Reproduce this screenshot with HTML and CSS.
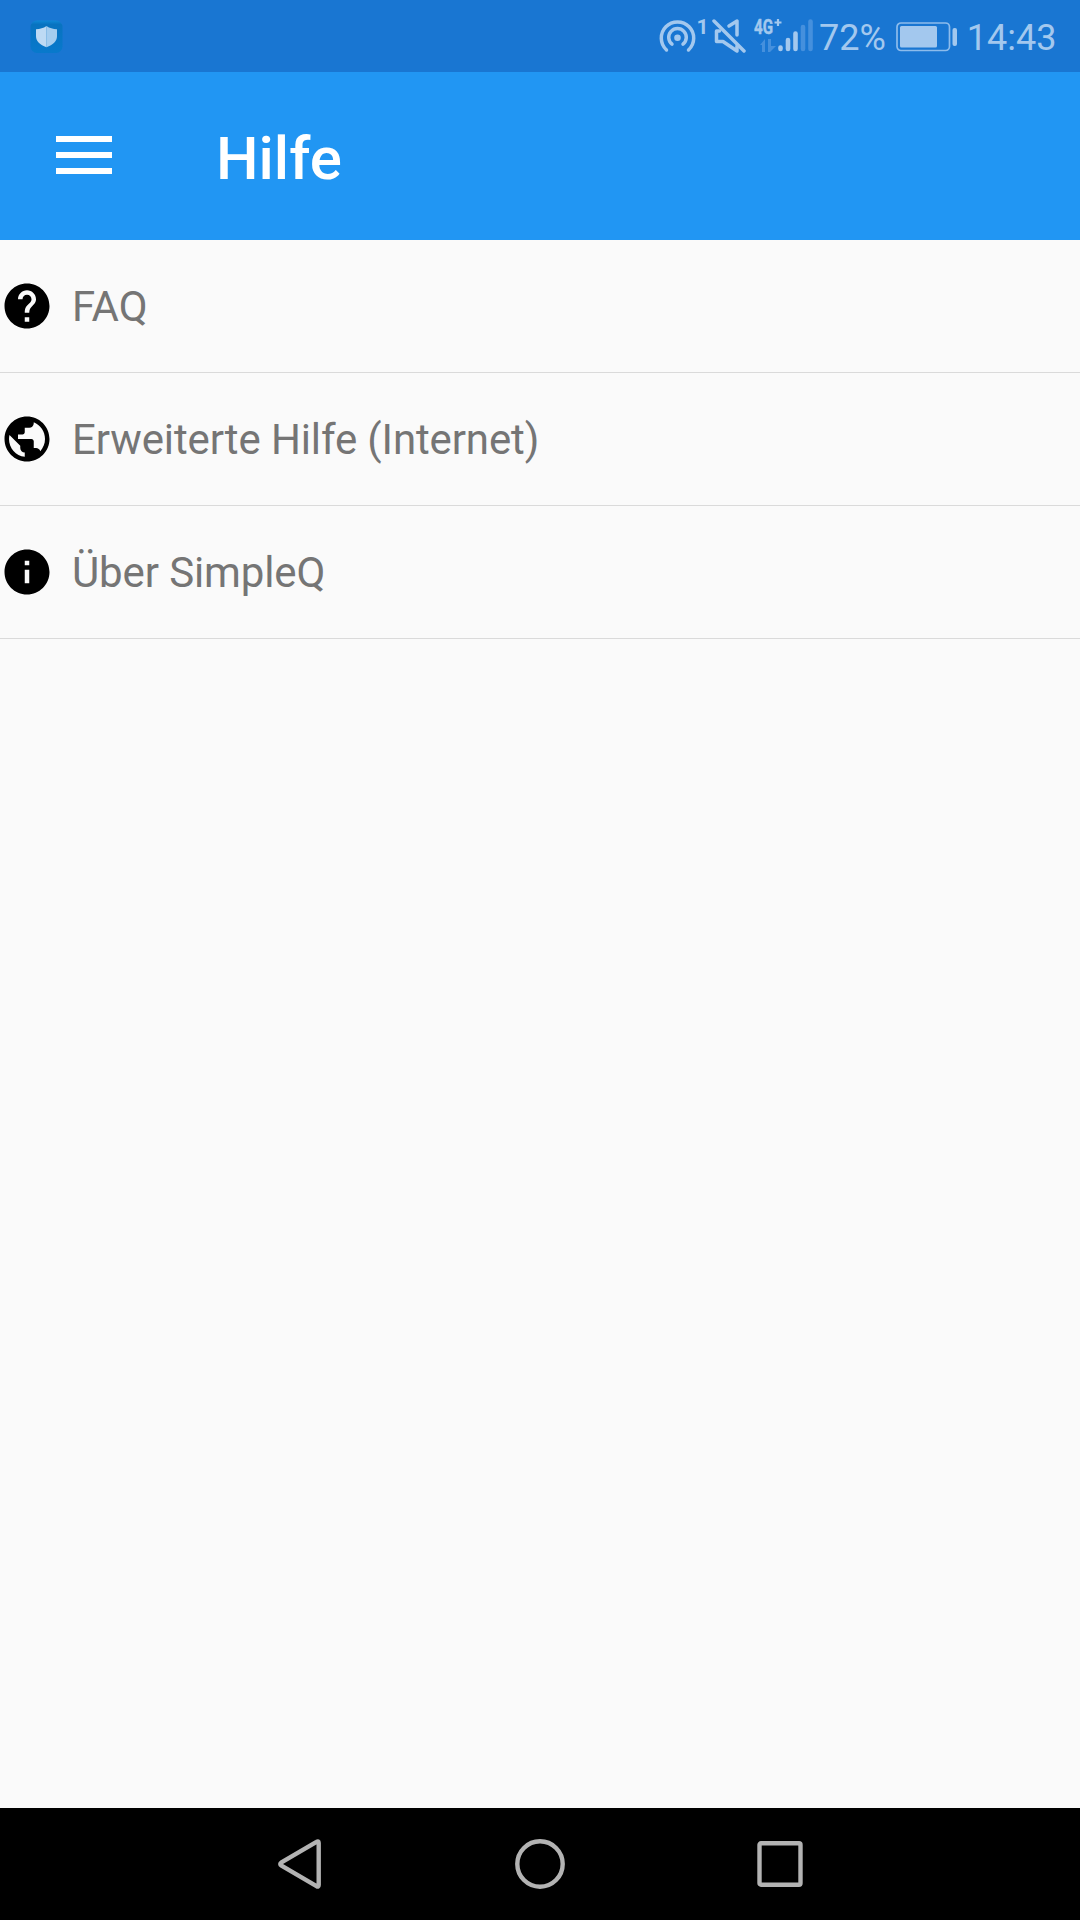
FILE: index.html
```html
<!DOCTYPE html>
<html lang="de">
<head>
<meta charset="utf-8">
<title>Hilfe</title>
<link rel="stylesheet" href="styles.css">
</head>
<body>
<div class="screen">
  <div class="status-bar">
    <svg class="app-shield" width="34" height="34" viewBox="0 0 34 34">
      <defs><linearGradient id="tile" x1="0" y1="0" x2="0" y2="1"><stop offset="0" stop-color="#1089d8"/><stop offset=".12" stop-color="#0873c0"/><stop offset="1" stop-color="#0879cc"/></linearGradient></defs>
      <rect x=".5" y=".5" width="32" height="32.5" rx="6.500" fill="url(#tile)"/>
      <path d="M16.500 6c3 2.200 6.500 3 10.500 3.200v7c0 5-4 8.500-10.500 11z" fill="#a5cdef"/>
      <path d="M16.500 6c-3 2.200-6.500 3-10.500 3.200v7c0 5 4 8.500 10.500 11z" fill="#bddaf4"/>
    </svg>
    <div class="indicators">
      <svg class="hotspot" width="52" height="46" viewBox="0 -10 52 46">
        <g fill="none" stroke="#a3c8ee" stroke-width="3.500" stroke-linecap="round">
          <path d="M7.500 32A16.200 16.200 0 1 1 29.500 32"/>
          <path d="M13 26.200A8.800 8.800 0 1 1 24 26.200"/>
        </g>
        <circle cx="18.500" cy="19.800" r="3.300" fill="#a3c8ee"/>
        <text class="badge-text" x="37.500" y="16" font-size="21">1</text>
      </svg>
      <svg class="muted" width="34" height="46" viewBox="0 -10 34 46">
        <g fill="none" stroke="#a3c8ee" stroke-width="3.500" stroke-linecap="round" stroke-linejoin="round">
          <path d="M2 3L32 33"/>
          <path d="M7.500 13H4.500V23.500H11L25 33V28"/>
          <path d="M17 8L25 3V17"/>
        </g>
      </svg>
      <svg class="signal" width="60" height="46" viewBox="0 -10 60 46">
        <text class="badge-text network" x="0" y="16" font-size="21" textLength="19" lengthAdjust="spacingAndGlyphs">4G</text>
        <path d="M20.500 4.500h7M24 1v7" stroke="#a3c8ee" stroke-width="2.200" fill="none"/>
        <path d="M6 27l5-6v13h-3v-7zM14 21h3v7h5l-6 6h-2z" fill="#4590dd"/>
        <g stroke-width="4.600" stroke-linecap="round" stroke="#a3c8ee">
          <path d="M26.500 29.500v1.500M34 22v9M41.500 15.500v15.500"/>
          <path d="M49 9v22M56.500 3.500v27.500" stroke="#4590dd"/>
        </g>
      </svg>
      <span class="status-text percent">72%</span>
      <svg class="battery" width="62" height="30" viewBox="0 0 62 30">
        <rect x="1" y="1" width="52.500" height="27.500" rx="4" fill="none" stroke="#8dbcec" stroke-width="1.700"/>
        <rect x="4" y="4" width="37" height="21.500" rx="1.500" fill="#a3c8ee"/>
        <rect x="56.500" y="6" width="4.500" height="18" rx="2" fill="#a3c8ee"/>
      </svg>
      <span class="status-text clock">14:43</span>
    </div>
  </div>

  <header class="app-bar">
    <svg class="menu-icon" width="56" height="38" viewBox="0 0 56 38"><path d="M0 0h56v6H0zM0 16h56v6H0zM0 32h56v6H0z" fill="#fff"/></svg>
    <h1 class="title">Hilfe</h1>
  </header>

  <main class="list">
    <div class="row">
      <svg class="row-icon" viewBox="0 0 24 24"><path d="M12 2C6.480 2 2 6.480 2 12s4.480 10 10 10 10-4.480 10-10S17.520 2 12 2zm1 17h-2v-2h2v2zm2.070-7.750l-.9.920C13.450 12.900 13 13.500 13 15h-2v-.5c0-1.100.45-2.100 1.170-2.830l1.240-1.260c.37-.36.59-.86.59-1.410 0-1.100-.9-2-2-2s-2 .9-2 2H8c0-2.210 1.790-4 4-4s4 1.790 4 4c0 .88-.36 1.680-.93 2.250z"/></svg>
      <span class="label">FAQ</span>
    </div>
    <div class="row">
      <svg class="row-icon" viewBox="0 0 24 24"><path d="M12 2C6.480 2 2 6.480 2 12s4.480 10 10 10 10-4.480 10-10S17.520 2 12 2zm-1 17.930c-3.950-.49-7-3.850-7-7.930 0-.62.080-1.210.21-1.790L9 15v1c0 1.100.9 2 2 2v1.930zm6.900-2.540c-.26-.81-1-1.390-1.900-1.390h-1v-3c0-.55-.45-1-1-1H8v-2h2c.55 0 1-.45 1-1V7h2c1.100 0 2-.9 2-2v-.41c2.930 1.190 5 4.060 5 7.410 0 2.080-.8 3.970-2.100 5.390z"/></svg>
      <span class="label">Erweiterte Hilfe (Internet)</span>
    </div>
    <div class="row">
      <svg class="row-icon" viewBox="0 0 24 24"><path d="M12 2C6.480 2 2 6.480 2 12s4.480 10 10 10 10-4.480 10-10S17.520 2 12 2zm1 15h-2v-6h2v6zm0-8h-2V7h2v2z"/></svg>
      <span class="label">Über SimpleQ</span>
    </div>
  </main>

  <nav class="nav-bar">
    <svg class="nav-icon" viewBox="0 0 50 50"><path d="M41.500 2.900Q43.700 1.500 43.700 4V46Q43.700 48.500 41.500 47.100L6.500 26.700Q4 25 6.500 23.300Z"/></svg>
    <svg class="nav-icon" viewBox="0 0 50 50"><circle cx="25" cy="25" r="22.700"/></svg>
    <svg class="nav-icon" viewBox="0 0 50 50"><rect x="4.500" y="4.300" width="41" height="41.400" rx="1.500"/></svg>
  </nav>
</div>
</body>
</html>
```
FILE: styles.css
```css
body {
  margin: 0;
  font-family: Roboto, sans-serif;
}

.screen {
  display: flex;
  flex-direction: column;
  width: 1080px;
  height: 1920px;
  background: #fafafa;
}

.status-bar {
  display: flex;
  align-items: flex-start;
  justify-content: space-between;
  box-sizing: border-box;
  height: 72px;
  padding: 0 23.500px 0 30px;
  background: #1976d2;
}

.app-shield {
  margin-top: 20px;
}

.indicators {
  display: flex;
  align-items: flex-start;
}

.hotspot,
.muted,
.signal {
  margin-top: 8px;
}

.muted {
  margin-left: 1px;
}

.signal {
  margin-left: 8px;
}

.badge-text {
  fill: #a3c8ee;
  font-weight: 700;
}

.network {
  stroke: #a3c8ee;
  stroke-width: 0.500px;
}

.status-text {
  color: #a3c8ee;
  font-size: 36px;
  line-height: 42px;
  margin-top: 17px;
}

.percent {
  margin-left: 5px;
}

.battery {
  margin: 22px 9px 0 10px;
}

.app-bar {
  display: flex;
  align-items: flex-start;
  box-sizing: border-box;
  height: 168px;
  padding-left: 56px;
  background: #2196f3;
}

.menu-icon {
  margin-top: 64px;
}

.title {
  margin: 51px 0 0 104px;
  color: #fff;
  font-size: 60px;
  font-weight: 500;
  line-height: 72px;
}

.row {
  display: flex;
  align-items: center;
  box-sizing: border-box;
  height: 133px;
  border-bottom: 1px solid #dadada;
}

.row-icon {
  width: 54px;
  height: 54px;
}

.label {
  margin-left: 18px;
  padding-top: 2px;
  color: #757575;
  font-size: 42px;
  line-height: 50px;
  letter-spacing: -0.120px;
}

.nav-bar {
  display: flex;
  align-items: center;
  justify-content: center;
  gap: 190px;
  height: 112px;
  margin-top: auto;
  background: #000;
}

.nav-icon {
  width: 50px;
  height: 50px;
  fill: none;
  stroke: #b3b3b3;
  stroke-width: 4.400px;
}
```
